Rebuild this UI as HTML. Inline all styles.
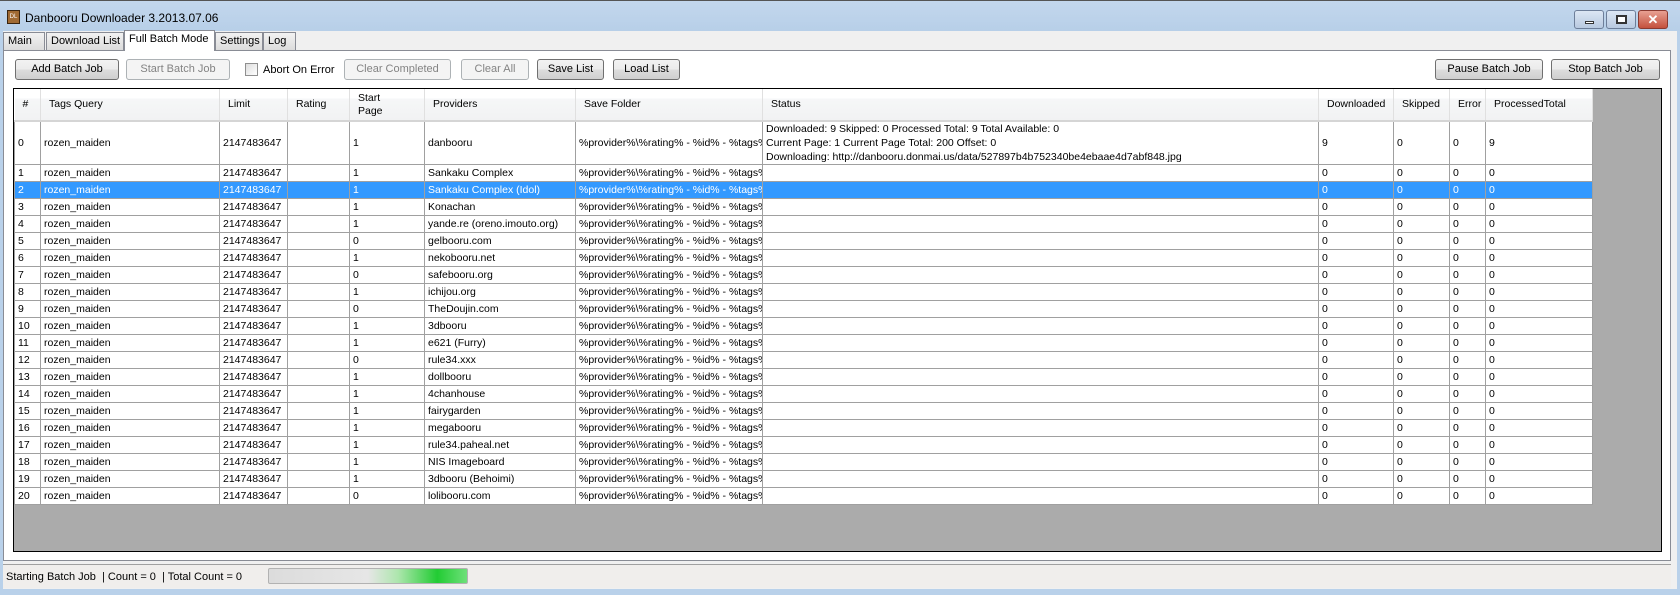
<!DOCTYPE html>
<html><head><meta charset="utf-8"><style>
*{box-sizing:border-box;margin:0;padding:0}
body{width:1680px;height:595px;overflow:hidden;background:#b9d1ea;font-family:"Liberation Sans",sans-serif;font-size:11px;color:#000;position:relative}
.abs{position:absolute}
.title{left:0;top:0;width:1680px;height:31px;background:linear-gradient(#c3d7ed,#b7cfe8);border-top:1px solid #555}
.tab{position:absolute;top:32px;height:18px;background:linear-gradient(#f2f2f2,#dcdcdc);border:1px solid #898c95;border-bottom:none;padding:2px 4px;font-size:11px;white-space:nowrap;overflow:hidden}
.tab.sel{top:30px;height:21px;background:#fff;z-index:2}
.btn{position:absolute;top:59px;height:21px;border:1px solid #707070;border-radius:3px;background:linear-gradient(#f2f2f2 0,#ebebeb 50%,#dddddd 50%,#cfcfcf);text-align:center;line-height:19px;font-size:11px;white-space:nowrap}
.btn.dis{border-color:#adb2b5;background:#f4f4f4;color:#838383}
table{border-collapse:collapse;table-layout:fixed;width:1578px;position:absolute;left:14px;top:89px;background:#fff}
td{border:1px solid #a0a0a0;height:17px;padding:0 0 0 3px;white-space:nowrap;overflow:hidden;font-size:10.5px;line-height:14px}
th{height:32px;font-weight:normal;text-align:left;padding-left:8px;background:linear-gradient(#fff 0,#fff 30%,#f6f7f8 30%,#f1f2f3);border-right:1px solid #e0e0e0;border-bottom:2px solid #d5d5d5;font-size:10.5px;line-height:13px;white-space:nowrap;overflow:hidden}
tr.s td{background:#3399ff;color:#fff}
</style></head><body>
<div class="abs title"></div>
<div class="abs" style="left:7px;top:10px;width:13px;height:14px;background:#a06a33;border:1px solid #3a2510;font-size:6px;color:#fff;text-align:center;line-height:12px">DL</div>
<div class="abs" style="left:25px;top:11px;font-size:12px">Danbooru Downloader 3.2013.07.06</div>
<div class="abs" style="left:1574px;top:10px;width:30px;height:19px;border:1px solid #6d7e99;border-radius:3px;background:linear-gradient(#dce7f4,#b8c9e0)"><div style="margin:10px auto 0;width:9px;height:3px;border:1px solid #333;background:#fff"></div></div>
<div class="abs" style="left:1606px;top:10px;width:30px;height:19px;border:1px solid #6d7e99;border-radius:3px;background:linear-gradient(#dce7f4,#b8c9e0)"><div style="margin:4px auto 0;width:11px;height:9px;border:2px solid #333;background:#fff"></div></div>
<div class="abs" style="left:1638px;top:10px;width:30px;height:19px;border:1px solid #8a3a30;border-radius:3px;background:linear-gradient(#e8a193,#c4513e);color:#fff;font-weight:bold;text-align:center;line-height:17px;font-size:13px">✕</div>
<div class="abs" style="left:3px;top:31px;width:1674px;height:558px;background:#f0f0f0"></div>
<div class="tab" style="left:3px;width:42px">Main</div>
<div class="tab" style="left:46px;width:78px">Download List</div>
<div class="tab sel" style="left:124px;width:91px">Full Batch Mode</div>
<div class="tab" style="left:215px;width:48px">Settings</div>
<div class="tab" style="left:263px;width:33px">Log</div>
<div class="abs" style="left:3px;top:50px;width:1668px;height:511px;background:#fff;border:1px solid #898c95"></div>
<div class="btn" style="left:15px;width:104px">Add Batch Job</div>
<div class="btn dis" style="left:126px;width:104px">Start Batch Job</div>
<div class="abs" style="left:245px;top:63px;width:13px;height:13px;border:1px solid #8f8f8f;background:linear-gradient(135deg,#ddd,#fff)"></div>
<div class="abs" style="left:263px;top:64px;font-size:11px">Abort On Error</div>
<div class="btn dis" style="left:344px;width:107px">Clear Completed</div>
<div class="btn dis" style="left:461px;width:68px">Clear All</div>
<div class="btn" style="left:537px;width:67px">Save List</div>
<div class="btn" style="left:613px;width:67px">Load List</div>
<div class="btn" style="left:1435px;width:108px">Pause Batch Job</div>
<div class="btn" style="left:1551px;width:109px">Stop Batch Job</div>
<div class="abs" style="left:13px;top:88px;width:1649px;height:464px;background:#ababab;border:1px solid #000"></div>
<table>
<colgroup><col style="width:26px"><col style="width:179px"><col style="width:68px"><col style="width:62px"><col style="width:75px"><col style="width:151px"><col style="width:187px"><col style="width:556px"><col style="width:75px"><col style="width:56px"><col style="width:36px"><col style="width:107px"></colgroup>
<tr><th>#</th><th>Tags Query</th><th>Limit</th><th>Rating</th><th>Start<br>Page</th><th>Providers</th><th>Save Folder</th><th>Status</th><th>Downloaded</th><th>Skipped</th><th>Error</th><th>ProcessedTotal</th></tr>
<tr><td style="height:43px">0</td><td>rozen_maiden</td><td>2147483647</td><td></td><td>1</td><td>danbooru</td><td>%provider%\%rating% - %id% - %tags%</td><td>Downloaded: 9 Skipped: 0 Processed Total: 9 Total Available: 0<br>Current Page: 1 Current Page Total: 200 Offset: 0<br>Downloading: http://danbooru.donmai.us/data/527897b4b752340be4ebaae4d7abf848.jpg</td><td>9</td><td>0</td><td>0</td><td>9</td></tr>
<tr><td>1</td><td>rozen_maiden</td><td>2147483647</td><td></td><td>1</td><td>Sankaku Complex</td><td>%provider%\%rating% - %id% - %tags%</td><td></td><td>0</td><td>0</td><td>0</td><td>0</td></tr>
<tr class="s"><td>2</td><td>rozen_maiden</td><td>2147483647</td><td></td><td>1</td><td>Sankaku Complex (Idol)</td><td>%provider%\%rating% - %id% - %tags%</td><td></td><td>0</td><td>0</td><td>0</td><td>0</td></tr>
<tr><td>3</td><td>rozen_maiden</td><td>2147483647</td><td></td><td>1</td><td>Konachan</td><td>%provider%\%rating% - %id% - %tags%</td><td></td><td>0</td><td>0</td><td>0</td><td>0</td></tr>
<tr><td>4</td><td>rozen_maiden</td><td>2147483647</td><td></td><td>1</td><td>yande.re (oreno.imouto.org)</td><td>%provider%\%rating% - %id% - %tags%</td><td></td><td>0</td><td>0</td><td>0</td><td>0</td></tr>
<tr><td>5</td><td>rozen_maiden</td><td>2147483647</td><td></td><td>0</td><td>gelbooru.com</td><td>%provider%\%rating% - %id% - %tags%</td><td></td><td>0</td><td>0</td><td>0</td><td>0</td></tr>
<tr><td>6</td><td>rozen_maiden</td><td>2147483647</td><td></td><td>1</td><td>nekobooru.net</td><td>%provider%\%rating% - %id% - %tags%</td><td></td><td>0</td><td>0</td><td>0</td><td>0</td></tr>
<tr><td>7</td><td>rozen_maiden</td><td>2147483647</td><td></td><td>0</td><td>safebooru.org</td><td>%provider%\%rating% - %id% - %tags%</td><td></td><td>0</td><td>0</td><td>0</td><td>0</td></tr>
<tr><td>8</td><td>rozen_maiden</td><td>2147483647</td><td></td><td>1</td><td>ichijou.org</td><td>%provider%\%rating% - %id% - %tags%</td><td></td><td>0</td><td>0</td><td>0</td><td>0</td></tr>
<tr><td>9</td><td>rozen_maiden</td><td>2147483647</td><td></td><td>0</td><td>TheDoujin.com</td><td>%provider%\%rating% - %id% - %tags%</td><td></td><td>0</td><td>0</td><td>0</td><td>0</td></tr>
<tr><td>10</td><td>rozen_maiden</td><td>2147483647</td><td></td><td>1</td><td>3dbooru</td><td>%provider%\%rating% - %id% - %tags%</td><td></td><td>0</td><td>0</td><td>0</td><td>0</td></tr>
<tr><td>11</td><td>rozen_maiden</td><td>2147483647</td><td></td><td>1</td><td>e621 (Furry)</td><td>%provider%\%rating% - %id% - %tags%</td><td></td><td>0</td><td>0</td><td>0</td><td>0</td></tr>
<tr><td>12</td><td>rozen_maiden</td><td>2147483647</td><td></td><td>0</td><td>rule34.xxx</td><td>%provider%\%rating% - %id% - %tags%</td><td></td><td>0</td><td>0</td><td>0</td><td>0</td></tr>
<tr><td>13</td><td>rozen_maiden</td><td>2147483647</td><td></td><td>1</td><td>dollbooru</td><td>%provider%\%rating% - %id% - %tags%</td><td></td><td>0</td><td>0</td><td>0</td><td>0</td></tr>
<tr><td>14</td><td>rozen_maiden</td><td>2147483647</td><td></td><td>1</td><td>4chanhouse</td><td>%provider%\%rating% - %id% - %tags%</td><td></td><td>0</td><td>0</td><td>0</td><td>0</td></tr>
<tr><td>15</td><td>rozen_maiden</td><td>2147483647</td><td></td><td>1</td><td>fairygarden</td><td>%provider%\%rating% - %id% - %tags%</td><td></td><td>0</td><td>0</td><td>0</td><td>0</td></tr>
<tr><td>16</td><td>rozen_maiden</td><td>2147483647</td><td></td><td>1</td><td>megabooru</td><td>%provider%\%rating% - %id% - %tags%</td><td></td><td>0</td><td>0</td><td>0</td><td>0</td></tr>
<tr><td>17</td><td>rozen_maiden</td><td>2147483647</td><td></td><td>1</td><td>rule34.paheal.net</td><td>%provider%\%rating% - %id% - %tags%</td><td></td><td>0</td><td>0</td><td>0</td><td>0</td></tr>
<tr><td>18</td><td>rozen_maiden</td><td>2147483647</td><td></td><td>1</td><td>NIS Imageboard</td><td>%provider%\%rating% - %id% - %tags%</td><td></td><td>0</td><td>0</td><td>0</td><td>0</td></tr>
<tr><td>19</td><td>rozen_maiden</td><td>2147483647</td><td></td><td>1</td><td>3dbooru (Behoimi)</td><td>%provider%\%rating% - %id% - %tags%</td><td></td><td>0</td><td>0</td><td>0</td><td>0</td></tr>
<tr><td>20</td><td>rozen_maiden</td><td>2147483647</td><td></td><td>0</td><td>lolibooru.com</td><td>%provider%\%rating% - %id% - %tags%</td><td></td><td>0</td><td>0</td><td>0</td><td>0</td></tr>
</table>
<div class="abs" style="left:3px;top:564px;width:1668px;height:24px;background:#f0eeec;border-top:1px solid #a0a0a0"></div>
<div class="abs" style="left:6px;top:571px;font-size:11px">Starting Batch Job &nbsp;| Count = 0 &nbsp;| Total Count = 0</div>
<div class="abs" style="left:268px;top:568px;width:200px;height:16px;border:1px solid #b2b2b2;border-radius:2px;background:linear-gradient(90deg,#dcdcdc 0,#e6e6e6 50%,#aee6ae 65%,#22cc33 85%,#6ee07a 100%)"></div>
</body></html>
